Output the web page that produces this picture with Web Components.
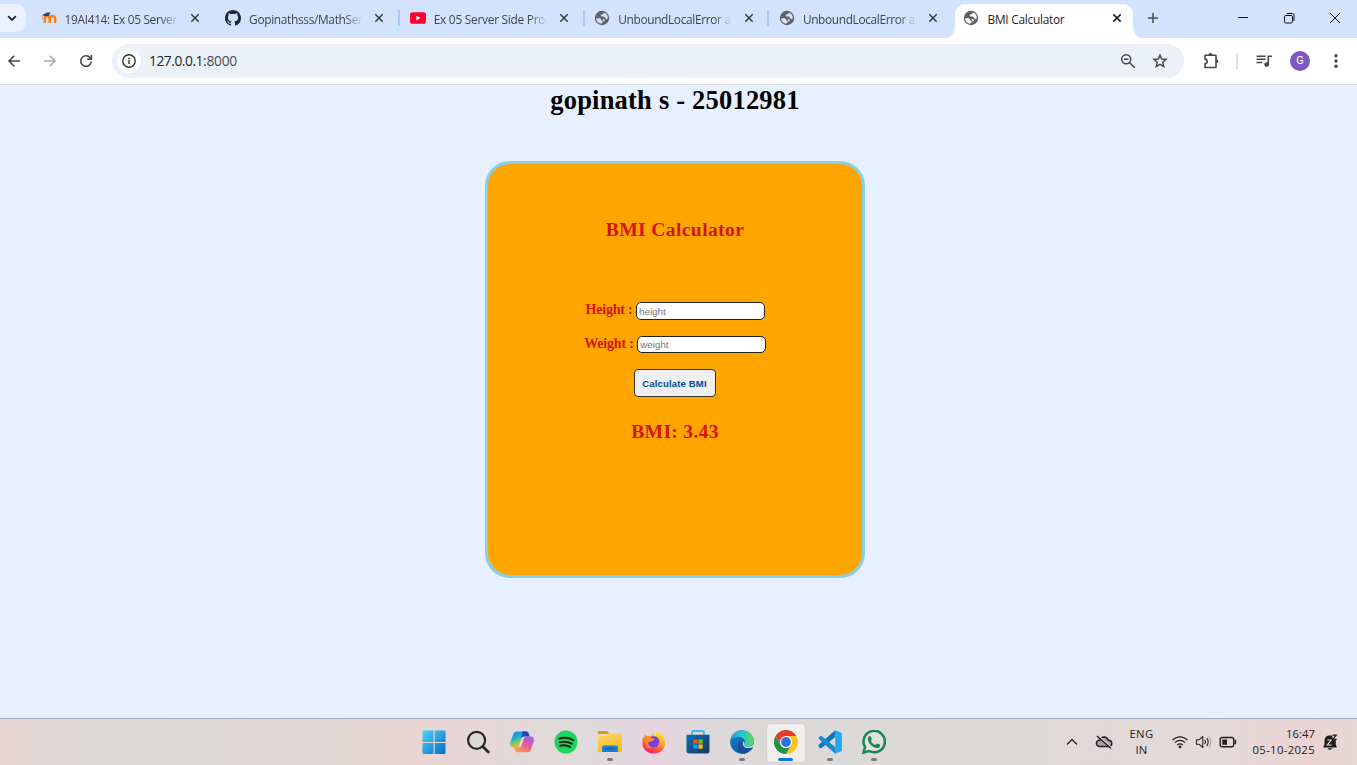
<!DOCTYPE html>
<html lang="en">
<head>
<meta charset="utf-8">
<title>BMI Calculator</title>
<style>
html,body{margin:0;height:100%;overflow:hidden}
body{font-family:"Open Sans","Noto Sans",sans-serif}
</style>
</head>
<body>
<desktop-screen></desktop-screen>
<script>
const define = (name, css, html, after) => {
  const t = document.createElement('template');
  t.innerHTML = `<style>*{box-sizing:border-box}svg{display:block;flex:none}${css}</style>${html}`;
  customElements.define(name, class extends HTMLElement {
    connectedCallback() {
      if (this.shadowRoot) return;
      this.attachShadow({mode: 'open'}).append(t.content.cloneNode(true));
      if (after) after(this, this.shadowRoot);
    }
  });
};

const ICONS = {
  down: ['0 0 16 16', '<path d="M4.2 6.2 8 10l3.8-3.8" fill="none" stroke="#1f2329" stroke-width="1.8"/>'],
  moodle: ['0 0 16 16', '<path d="M3.8 13V8.6c0-3.6 4.9-3.6 4.9 0V13m0-4.4c0-3.6 5.4-3.6 5.4 0V13" fill="none" stroke="#f98012" stroke-width="2.5"/><path d="m1 5.2 5-2.8 3.8.2-2.5 3.3L3.6 6Z" fill="#424448"/><path d="M1.3 5.3v4" stroke="#b9a79a" stroke-width=".8"/>'],
  github: ['0 0 16 16', '<path fill="#1f2733" d="M8 0C3.58 0 0 3.58 0 8c0 3.54 2.29 6.53 5.47 7.59.4.07.55-.17.55-.38 0-.19-.01-.82-.01-1.49-2.01.37-2.53-.49-2.69-.94-.09-.23-.48-.94-.82-1.13-.28-.15-.68-.52-.01-.53.63-.01 1.08.58 1.23.82.72 1.21 1.87.87 2.33.66.07-.52.28-.87.51-1.07-1.78-.2-3.64-.89-3.64-3.95 0-.87.31-1.59.82-2.15-.08-.2-.36-1.02.08-2.12 0 0 .67-.21 2.2.82a7.7 7.7 0 0 1 4 0c1.53-1.04 2.2-.82 2.2-.82.44 1.1.16 1.92.08 2.12.51.56.82 1.27.82 2.15 0 3.07-1.87 3.75-3.65 3.95.29.25.54.73.54 1.48 0 1.07-.01 1.93-.01 2.2 0 .21.15.46.55.38A8 8 0 0 0 16 8c0-4.42-3.58-8-8-8"/>'],
  youtube: ['0 0 16 16', '<rect x="0" y="2.3" width="16" height="11.5" rx="2.6" fill="#ff0033"/><path d="m6.3 5.7 4.2 2.35-4.2 2.35Z" fill="#fff"/>'],
  globe: ['0 0 16 16', '<circle cx="8" cy="8" r="7.2" fill="#5f6368"/><path fill="var(--hole,#d3e3fd)" d="M2.300 8.200H5c1.500 0 2.200.6 2.200 1.500 0 .8.600 1.100 1.500 1.200.3 1.400-.4 2-1.700 2.700-2.800-.2-4.900-2.700-4.700-5.400M9.800 2.500c0 1-.5 1.600-1.600 1.700-.9.1-1.400.5-1.400 1.300 0 .7.5 1 1.300 1 1.500 0 2.600.3 3 1.500.3.9 1 1.200 2.500 1a5.700 5.700 0 0 0-3.800-6.500" /><path d="M8.800 8.800c1.300.3 2.200.8 2.300 1.900l-1.700.8" fill="var(--hole,#d3e3fd)"/>'],
  close: ['0 0 10 10', '<path d="m1.300 1.300 7.400 7.400m0-7.400L1.300 8.700" stroke="#3b3f43" stroke-width="1.600"/>'],
  closeDark: ['0 0 10 10', '<path d="m1.300 1.300 7.400 7.400m0-7.400L1.300 8.700" stroke="#1f2329" stroke-width="1.700"/>'],
  plus: ['0 0 12 12', '<path d="M6 1v10M1 6h10" stroke="#474b50" stroke-width="1.500"/>'],
  min: ['0 0 12 12', '<path d="M1 5.500h10" stroke="#111"/>'],
  restore: ['0 0 12 12', '<rect x="1.500" y="3.500" width="8" height="7.500" rx="1.300" fill="none" stroke="#111"/><path d="M3.700 1.500h5.600a1.700 1.700 0 0 1 1.700 1.700v5.600" fill="none" stroke="#111"/>'],
  x: ['0 0 12 12', '<path d="m1 1 10 10M11 1 1 11" stroke="#111"/>'],
  back: ['0 0 16 16', '<path d="M14 8H3m5.300-5.300L3 8l5.300 5.300" fill="none" stroke="#454746" stroke-width="1.600"/>'],
  fwd: ['0 0 16 16', '<path d="M2 8h11M7.700 2.700 13 8l-5.300 5.300" fill="none" stroke="#a7a9ab" stroke-width="1.600"/>'],
  reload: ['0 0 16 16', '<path d="M13.300 8.500A5.300 5.300 0 1 1 12 4.600l1.400 1.500" fill="none" stroke="#454746" stroke-width="1.600"/><path d="M13.400 2v4.200H9.200" fill="none" stroke="#454746" stroke-width="1.600"/>'],
  info: ['0 0 16 16', '<circle cx="8" cy="8" r="6.200" fill="none" stroke="#303234" stroke-width="1.400"/><path d="M8 7.300v3.700M8 4.700v1.500" stroke="#303234" stroke-width="1.500"/>'],
  zoomout: ['0 0 16 16', '<circle cx="6.200" cy="6.200" r="4.500" fill="none" stroke="#454746" stroke-width="1.500"/><path d="m9.500 9.500 5.300 5.300M4 6.200h4.400" stroke="#454746" stroke-width="1.500"/>'],
  star: ['0 0 16 16', '<path d="m8 2 1.700 4 4.400.400-3.300 2.900 1 4.300L8 11.300l-3.800 2.300 1-4.300L1.900 6.400 6.300 6Z" fill="none" stroke="#454746" stroke-width="1.400"/>'],
  puzzle: ['0 0 18 18', '<path d="M3 3.200h11v12.300H3v-3.800c2.900-.4 2.900-4.200 0-4.600Z" fill="none" stroke="#454746" stroke-width="1.600" stroke-linejoin="round"/><path d="M6.500 2.900a2 2 0 0 1 4 0M14.400 7.300a2 2 0 0 1 0 4" fill="#454746"/>'],
  music: ['0 0 16 16', '<path d="M.5 3.200h9M.5 6.300h9M.5 9.400h5.600" stroke="#454746" stroke-width="1.500"/><path d="M12.300 11.500V3.200H16" fill="none" stroke="#454746" stroke-width="1.600"/><circle cx="10.700" cy="11.600" r="2.400" fill="#454746"/>'],
  dots: ['0 0 16 16', '<g fill="#454746"><circle cx="8" cy="2.800" r="1.700"/><circle cx="8" cy="8" r="1.700"/><circle cx="8" cy="13.200" r="1.700"/></g>'],
  win: ['0 0 24 24', '<defs><linearGradient id="w" x2="1" y2="1"><stop stop-color="#50d2fb"/><stop offset="1" stop-color="#006fc9"/></linearGradient></defs><path fill="url(#w)" d="M1.500.5h10V12h-11V1.500q0-1 1-1M12.700.5h9.800q1 0 1 1V12H12.700M.5 13h11v11h-10q-1 0-1-1M12.700 13h10.800v10q0 1-1 1h-9.800"/>'],
  search: ['0 0 24 24', '<circle cx="10.600" cy="10.300" r="8.500" fill="#ded9d9" stroke="#282828" stroke-width="2.200"/><path d="m16.800 16.500 5.500 5.500" stroke="#282828" stroke-width="2.700" stroke-linecap="round"/>'],
  copilot: ['0 0 24 24', '<defs><linearGradient id="c1" x2=".5" y2="1"><stop stop-color="#1c7be8"/><stop offset=".45" stop-color="#22b4cc"/><stop offset=".75" stop-color="#a9c943"/><stop offset="1" stop-color="#f5bb1d"/></linearGradient><linearGradient id="c2" x1=".8" x2=".2" y2="1"><stop stop-color="#a05cf1"/><stop offset=".5" stop-color="#ef5b91"/><stop offset="1" stop-color="#fca04b"/></linearGradient></defs><path d="M7 1.500h9c2 0 2.600 1.300 3.100 3.500l.4 1.500h-5.300c-2 0-2.700 1.300-3.200 3.200L9.400 15c-.5 1.700-1.400 2.500-3 2.500H3.300C.5 17.500-.3 15 .4 12.400L3 4.400C3.600 2.500 5 1.500 7 1.500" fill="url(#c1)"/><path d="M12.400 1.500H16c2 0 2.600 1.300 3.100 3.500l.4 1.500h-5.300c-1.700 0-2.500 1-3 2.500Z" fill="#184dc0"/><path d="M17 22.300H8c-2 0-2.700-1.200-3.200-3.300l-.4-1.500h3.200c2.600 0 3.400-1.200 3.900-3.200l1.600-5.200c.5-1.800 1.400-2.600 3-2.600h4.600c2.800 0 3.600 2.500 2.900 5.100l-2.600 7.800c-.6 1.900-2 2.900-4 2.900" fill="url(#c2)"/><path d="M13.300 7.300h1.800q-1.200.6-1.700 2.300l-1.700 5.300q-.7 2.400-2.600 2.700H7.700q2.300-.3 3-2.500l1.500-5q.5-1.800 1.100-2.800" fill="#f0e6e8"/>'],
  spotify: ['0 0 24 24', '<circle cx="12" cy="12" r="11.500" fill="#1ed760"/><path d="M5 8.600c5-1.400 10-.9 14.400 1.500M5.600 12.300c4.200-1.200 8.500-.7 12.200 1.400M6.200 15.700c3.700-.9 7-.5 10 1.200" fill="none" stroke="#132419" stroke-width="2" stroke-linecap="round"/>'],
  folder: ['0 0 24 24', '<defs><linearGradient id="f" y2="1" x2=".3"><stop stop-color="#ffda68"/><stop offset="1" stop-color="#f8bb25"/></linearGradient></defs><path d="M0 2.200Q0 1 1.200 1h7.200q1 0 1.700 1l1.400 2H0Z" fill="#d79b0b"/><path d="M0 5.500h8.500L11 3h12q1 0 1 1v18H0Z" fill="url(#f)"/><path d="M4 22v-4.500q0-2 2-2h12q2 0 2 2V22Z" fill="#1682d0"/><path d="M7 18.800h10" stroke="#0962a6" stroke-width="1.200"/>'],
  firefox: ['0 0 24 24', '<defs><linearGradient id="ff" x1=".8" x2=".3" y2="1"><stop stop-color="#fff13c"/><stop offset=".4" stop-color="#ffad27"/><stop offset=".7" stop-color="#ff593e"/><stop offset="1" stop-color="#ee216f"/></linearGradient></defs><path d="M15.500.3c1 2.700 4.500 3.500 6.300 7 4 8-1.300 16.300-9.600 16.300C4.800 23.600.3 18.500.4 12.500c0-3 .8-4.700 2-6.200l.4-2 2 1.700c1.100-.3 2.500-.2 3.500.3 1.200-1.700 1.800-2.300 3.500-3-.3 2 .7 2.600 2.200 3.100-.1-2.500.2-4.600 1.500-6.100" fill="url(#ff)"/><path d="M8 7.500c5-3.400 9.700 0 9.200 5-.4 4-4.500 5.800-7.700 4.500-2.300-1-3.500-3-3.200-5.300l4.200-.7 2-1.500c-1.600-.1-3-.7-4.500-2" fill="#7644dd"/><path d="M2.600 8c1.500-2 4-2 5.600-.7 1 1 2.500 1.300 3.700 1.600-1.500 2.800-4.700 1.800-5.600 3.500-.8 2 1.200 5.100 4.200 5.700-4.300 1-8.800-3-7.900-10.100" fill="#ff8a31"/>'],
  store: ['0 0 24 24', '<defs><linearGradient id="st" y2="1"><stop stop-color="#0a6fb5"/><stop offset="1" stop-color="#1c3764"/></linearGradient></defs><path d="M6 5V2.300Q6 1 7.300 1h9.400Q18 1 18 2.300V5" fill="none" stroke="#35bdf2" stroke-width="1.800"/><path d="M.5 4.700h23V21q0 2.500-2.500 2.500H3Q.5 23.500.5 21Z" fill="url(#st)"/><path d="M7.300 9.500h4.300v4.200H7.300Z" fill="#f25022"/><path d="M12.400 9.500h4.300v4.200h-4.300Z" fill="#7fba00"/><path d="M7.300 14.500h4.300v4.200H7.300Z" fill="#00a4ef"/><path d="M12.400 14.500h4.300v4.200h-4.300Z" fill="#ffb900"/>'],
  edge: ['0 0 24 24', '<defs><linearGradient id="e1" x2="1"><stop stop-color="#19a7df"/><stop offset=".5" stop-color="#28c3d6"/><stop offset="1" stop-color="#61d953"/></linearGradient><linearGradient id="e2" y2="1"><stop stop-color="#1782c8"/><stop offset="1" stop-color="#104c98"/></linearGradient></defs><circle cx="12" cy="12" r="11.800" fill="url(#e2)"/><path d="M.5 10C1.800 4 6.300.2 12 .2c7 0 12 5.300 12 10.500 0 3.800-2.700 6-6 6-2.400 0-4.200-.8-4-1.800.1-.7.9-1.100.9-2.900 0-2.800-2.600-5-6-5-3.600 0-6.800 1-8.400 3" fill="url(#e1)"/><path d="M13.900 13.300c-.5 3 2 4.700 4.700 4.700 1.600 0 2.700-.5 3.800-1l.8.400C20.800 21 17 23.800 12.500 23.800 8 22 6.300 17.600 8.600 13.800c1.200-1.800 3-2.500 5.300-.5" fill="#164f9e"/><path d="M13.200 11.500c-1.500 3.300 1 6.800 5.300 6.500 2 0 3.600-.7 5.500-1.600l.5-2.500-3 2c-2.500 1.400-6.800 1.100-7.300-.9.300-1 .5-2.500-1-3.500" fill="#ded9dc"/>'],
  chrome: ['0 0 24 24', '<path d="M12 6h10.400A12 12 0 0 1 12 24l5.200-9Z" fill="#fcc31e"/><path d="M1.600 6A12 12 0 0 1 22.400 6H12L6.800 15Z" fill="#e33b2e"/><path d="M1.600 6 6.800 15A6 6 0 0 0 17.200 15L12 24A12 12 0 0 1 1.600 6" fill="#229342"/><circle cx="12" cy="12" r="6" fill="#fff"/><circle cx="12" cy="12" r="4.900" fill="#2d70e8"/>'],
  vscode: ['0 0 24 24', '<path d="m17.200.2-15.800 14-.9 1.300q-.2.800.4 1.400l1.200 1q.8.500 1.500 0L17.200 7Z" fill="#0877ba"/><path d="m3.600 6 13.600 11v6.800L.9 8.900q-.7-.7 0-1.400l1.200-1.300q.7-.7 1.500-.2" fill="#168bd0"/><path d="m17.200.2 5.500 2.200q1.200.6 1.200 1.800v15.600q0 1.300-1.200 1.800l-5.500 2.200-1.300-1.300q1.300.3 1.300-1V2.500q0-1.200-1.300-1Z" fill="#28a5ef"/>'],
  whatsapp: ['0 0 24 24', '<path d="M1.500 22.500 3 17A10.700 10.700 0 1 1 7.200 21Z" fill="#e4dfdf" stroke="#168653" stroke-width="2.500"/><path d="M7.200 6.200c.5-.5 1.300-.4 1.600.2l1 2.300c.4 1-.8 1.700-.8 2.200.8 1.800 2.200 3.100 4.200 4 .7 0 1.200-1.700 2.200-1.300l2.200 1c.9.500.7 1.200.3 1.900-.8 1.500-2.800 1.800-4.500 1.200-3.200-1-5.800-3.400-7.100-6.400-.7-2-.5-3.800.9-5.100" fill="#168653"/>'],
  up: ['0 0 12 12', '<path d="m1 8.500 5-5 5 5" fill="none" stroke="#222" stroke-width="1.300"/>'],
  cloud: ['0 0 18 16', '<path d="M5 12.500C0 12.500.5 6 4.700 6.200 6.300 1.800 12 2 13.300 6.200c4.800.2 4.400 6.300.2 6.300Z" fill="#aaa5a5" stroke="#222" stroke-width="1.500"/><path d="m3.200 1.500 13 12" stroke="#e3dcdc" stroke-width="1.300"/><path d="m2 2 14 12.500" stroke="#222" stroke-width="1.400"/>'],
  wifi: ['0 0 18 16', '<g fill="none" stroke="#222" stroke-width="1.200"><path d="M1.500 6.200c4.500-4.500 10.500-4.500 15 0M3.900 8.700c3-3 7.200-3 10.200 0M6.200 11.200c1.600-1.700 4-1.700 5.600 0"/></g><circle cx="9" cy="12.900" r="1.400" fill="#222"/>'],
  sound: ['0 0 18 16', '<path d="M1.500 5.700h2.800l3.500-3.200v11l-3.500-3.200H1.500Z" fill="none" stroke="#222" stroke-width="1.100" stroke-linejoin="round"/><path d="M9.800 5.800q1.500 2.200 0 4.400M11.800 4q2.800 4 0 8" fill="none" stroke="#222" stroke-width="1.100"/><path d="M13.900 2.300q3.800 5.700 0 11.400" fill="none" stroke="#aaa4a4"/>'],
  battery: ['0 0 18 16', '<rect x="1.200" y="3.500" width="13.500" height="9.300" rx="2" fill="none" stroke="#222" stroke-width="1.400"/><path d="M3.200 5.500H8v5.300H3.200Z" fill="#222"/><path d="M15.500 6.500h1v3h-1" stroke="#222" fill="none" stroke-width="1.300"/>'],
  bell: ['0 0 18 18', '<path d="M3.500 11.500V8C3.500 4.500 5.500 2.500 9 2.500h2.500v4h3.300v5L16 14.500H2ZM6.500 15.300h5q-2.500 3.200-5 0" fill="#1d1d1d"/><path d="M6.300 7h3.900l-3.900 5h4.400" fill="none" stroke="#e9dada" stroke-width="1.200"/><path d="M11.700 2.200h3.600l-3.600 4.200h4" fill="none" stroke="#1d1d1d" stroke-width="1.200"/>']
};

/* Icon drawn from the table above. */
define('ui-icon', ':host{display:block;flex:none}', '', (el, root) => {
  const [box, body] = ICONS[el.getAttribute('name')], s = el.getAttribute('size') || 16;
  const [, , w, h] = box.split(' ').map(Number);
  const holder = document.createElement('template');
  holder.innerHTML = `<svg width="${s}" height="${s * h / w}" viewBox="${box}">${body}</svg>`;
  root.append(holder.content);
});

/* One line of text, tracked so that it runs exactly "width" pixels. */
define('ui-text', ':host{display:block;flex:none;white-space:nowrap}span{display:inline-block;white-space:pre}', '<span></span>', (el, root) => {
  const s = root.querySelector('span'), w = parseFloat(el.getAttribute('width'));
  s.textContent = el.getAttribute('text');
  if (w) s.style.letterSpacing = ((w - s.getBoundingClientRect().width) / s.textContent.length) + 'px';
});

define('browser-tab', `
:host{display:flex;align-items:center;width:184.600px;height:38px;flex:none;padding:0 0 2px 10.500px;font-size:11.900px;color:#41454a;position:relative}
.t{flex:none;width:114px;margin-left:8px;overflow:hidden;line-height:18px;padding-top:1px;-webkit-mask:linear-gradient(90deg,#000 84%,transparent);mask:linear-gradient(90deg,#000 84%,transparent)}
.c{margin-left:11.400px}
:host([sep])::after{content:"";flex:none;width:2px;height:16px;background:#a8c7fa;margin-left:13.500px}
:host([active]){color:#1f2329;--hole:#fff}
:host([active]) .c{margin-left:10.500px}
:host([active])::before{content:"";position:absolute;z-index:-1;left:2px;top:4px;width:178px;height:34px;background:#fff;border-radius:10px 10px 0 0}
.l,.r{display:none}
:host([active]) .l,:host([active]) .r{display:block;position:absolute;bottom:0;width:10px;height:10px;left:-8px;background:radial-gradient(circle at 0 0,transparent 9.500px,#fff 10.200px)}
:host([active]) .r{left:180px;background:radial-gradient(circle at 100% 0,transparent 9.500px,#fff 10.200px)}
:host([active]) .t{-webkit-mask:none;mask:none}
`, '<i class="l"></i><i class="r"></i>', (el, root) => {
  const h = document.createElement('template');
  const act = el.hasAttribute('active');
  h.innerHTML = `<ui-icon name="${el.getAttribute('icon')}" size="16"></ui-icon><div class="t"><ui-text text="${el.getAttribute('label')}" width="${el.getAttribute('w')}"></ui-text></div><ui-icon class="c" name="${act ? 'closeDark' : 'close'}" size="10"></ui-icon>`;
  root.append(h.content);
});

define('tab-strip', `
:host{display:flex;height:38px;background:#d3e3fd;position:relative;z-index:0}
.menu{width:30px;height:38px;flex:none;padding-top:4px}
.menu div{width:26px;height:28px;background:#ebf1fd;border-radius:0 10px 10px 0;padding:6px 0 0 4px}
.plus{margin:12px 0 0 9.500px}
.w{display:flex;margin:12px 16px 0 auto;gap:34px}
`, `<div class="menu"><div><ui-icon name="down"></ui-icon></div></div>
<browser-tab icon="moodle" label="19AI414: Ex 05 Server" w="112.500"></browser-tab>
<browser-tab icon="github" label="Gopinathsss/MathSer" w="113.500" sep></browser-tab>
<browser-tab icon="youtube" label="Ex 05 Server Side Proc" w="117" sep></browser-tab>
<browser-tab icon="globe" label="UnboundLocalError at" w="116" sep></browser-tab>
<browser-tab icon="globe" label="UnboundLocalError at" w="116"></browser-tab>
<browser-tab icon="globe" label="BMI Calculator" w="77" active></browser-tab>
<ui-icon class="plus" name="plus" size="12"></ui-icon>
<div class="w"><ui-icon name="min" size="12"></ui-icon><ui-icon name="restore" size="12"></ui-icon><ui-icon name="x" size="12"></ui-icon></div>`);

define('address-bar', `
:host{display:flex;align-items:center;height:47px;background:#fff;border-bottom:1px solid #dfe1e5;padding:0 13px 0 6px}
.o{display:flex;align-items:center;width:1072px;flex:none;height:34px;margin-left:18px;border-radius:17px;background:#ebf0f9;padding:0 16px 0 5px}
.i{width:24px;height:24px;border-radius:12px;background:#fff;padding:4px}
.u{display:flex;margin-left:8px;font-size:13.800px;line-height:20px;color:#1f2329}.u .p{color:#474b50}
.z{margin-left:auto}.s{flex:none;width:2px;height:16px;background:#d3e3fd;margin:0 18px 0 16px}
.g{flex:none;width:20px;height:20px;border-radius:50%;background:#7e57c2;color:#fff;font:11px/20px Roboto,sans-serif;text-align:center;margin:0 18px 0 18px}
`, `<ui-icon name="back"></ui-icon><ui-icon name="fwd" style="margin-left:20px"></ui-icon><ui-icon name="reload" style="margin-left:20px"></ui-icon>
<div class="o"><div class="i"><ui-icon name="info"></ui-icon></div><div class="u"><ui-text text="127.0.0.1" width="54"></ui-text><ui-text class="p" text=":8000" width="34"></ui-text></div><ui-icon class="z" name="zoomout"></ui-icon><ui-icon name="star" style="margin-left:16px"></ui-icon></div>
<ui-icon name="puzzle" size="18" style="margin-left:18px"></ui-icon><div class="s"></div><ui-icon name="music"></ui-icon><div class="g">G</div><ui-icon name="dots"></ui-icon>`);

define('form-row', `
:host{display:flex;justify-content:center;height:18px}
b{display:block;line-height:16px;font-size:14px}
input{width:129px;height:var(--h,18px);border:1.500px solid #222;border-radius:5px;background:#fff;padding:0 2.500px;margin:0 0 0 3px;font:9.800px "Liberation Sans",sans-serif;outline:0}
input::placeholder{color:#757575;opacity:1}
`, '<b></b><input>', (el, root) => {
  root.querySelector('b').innerHTML = `<ui-text text="${el.getAttribute('label')} :" width="${el.getAttribute('w')}"></ui-text>`;
  root.querySelector('input').placeholder = el.getAttribute('hint');
});

define('bmi-card', `
:host{display:flex;flex-direction:column;align-items:center;width:380px;height:417px;background:orange;border:3px solid skyblue;border-radius:25px;color:#d01616;font-family:"Liberation Serif",serif;font-weight:bold;padding-top:54px}
.t{font-size:19.600px;line-height:24px}
button{display:block;width:82px;height:28px;margin:15px 1px 0 0;border:1.500px solid #333;border-radius:4px;background:#efefef;color:#004a94;font:bold 9.500px "Liberation Sans",sans-serif;padding:1px 0 0;text-align:center}
button ui-text{text-align:center}
`, `<ui-text class="t" text="BMI Calculator" width="138.500"></ui-text>
<form-row label="Height" hint="height" w="47" style="margin-top:60px"></form-row>
<form-row label="Weight" hint="weight" w="49.500" style="margin-top:16px;--h:17px"></form-row>
<button><ui-text text="Calculate BMI" width="64.500"></ui-text></button>
<ui-text class="t" text="BMI: 3.43" width="87.500" style="margin-top:23px"></ui-text>`);

define('page-view', `
:host{display:flex;flex-direction:column;align-items:center;height:633px;background:#e6f0ff;padding-right:7px}
h1{margin:0 0 46px;font:bold 26.500px/30px "Liberation Serif",serif;color:#000}
`, `<h1><ui-text text="gopinath s - 25012981" width="249.500"></ui-text></h1><bmi-card></bmi-card>`);

define('task-item', `
:host{display:flex;flex-direction:column;align-items:center;width:38px;height:38px;padding-top:6px;border-radius:4px;flex:none}
:host([on]){background:#f1eeee;box-shadow:0 0 0 1px #d6d0d0}
i{display:none;width:6px;height:3px;border-radius:2px;background:#7e7979;margin-top:4px}
:host([run]) i{display:block}:host([on]) i{display:block;width:15px;background:#0078d4}
`, '<slot></slot><i></i>');

define('task-bar', `
:host{display:flex;height:47px;border-top:1px solid #a9aab5;background:linear-gradient(90deg,#e8d5d5 0,#dedada 7%,#ddd9d8 15%,#e3d7d6 25%,#ead5d4 31%,#e6d7d9 36%,#dfdbdb 43%,#e5d4df 48%,#dcdad9 54%,#dcd9d9 65%,#e0dada 78%,#e5d9d9 90%,#ecd3d3 97%,#e7d7d7 100%);color:#222;font-size:11.300px}
.a{display:flex;gap:6px;margin:5px 0 0 414.600px}
.r{display:flex;align-items:center;margin-left:auto;padding-right:18px;height:46px}
.x{line-height:16px;display:flex;flex-direction:column;align-items:center}
.d{align-items:flex-end}
`, `<div class="a">
<task-item><ui-icon name="win" size="24"></ui-icon></task-item>
<task-item><ui-icon name="search" size="24"></ui-icon></task-item>
<task-item><ui-icon name="copilot" size="24"></ui-icon></task-item>
<task-item><ui-icon name="spotify" size="24"></ui-icon></task-item>
<task-item run><ui-icon name="folder" size="24"></ui-icon></task-item>
<task-item><ui-icon name="firefox" size="24"></ui-icon></task-item>
<task-item><ui-icon name="store" size="24"></ui-icon></task-item>
<task-item run><ui-icon name="edge" size="24"></ui-icon></task-item>
<task-item run on><ui-icon name="chrome" size="24"></ui-icon></task-item>
<task-item run><ui-icon name="vscode" size="24"></ui-icon></task-item>
<task-item run><ui-icon name="whatsapp" size="24"></ui-icon></task-item></div>
<div class="r"><ui-icon name="up" size="12"></ui-icon><ui-icon name="cloud" size="18" style="margin-left:17px"></ui-icon>
<div class="x" style="margin-left:17px"><ui-text text="ENG" width="24"></ui-text><ui-text text="IN" width="12"></ui-text></div>
<ui-icon name="wifi" size="18" style="margin-left:17px"></ui-icon><ui-icon name="sound" size="18" style="margin-left:6px"></ui-icon><ui-icon name="battery" size="18" style="margin-left:6px"></ui-icon>
<div class="x d" style="margin-left:16px"><ui-text text="16:47" width="29"></ui-text><ui-text text="05-10-2025" width="62.500"></ui-text></div>
<ui-icon name="bell" size="18" style="margin-left:6px"></ui-icon></div>`);

define('desktop-screen', ':host{display:flex;flex-direction:column;width:1357px;height:765px;overflow:hidden}', '<tab-strip></tab-strip><address-bar></address-bar><page-view></page-view><task-bar></task-bar>');
</script>
</body>
</html>
